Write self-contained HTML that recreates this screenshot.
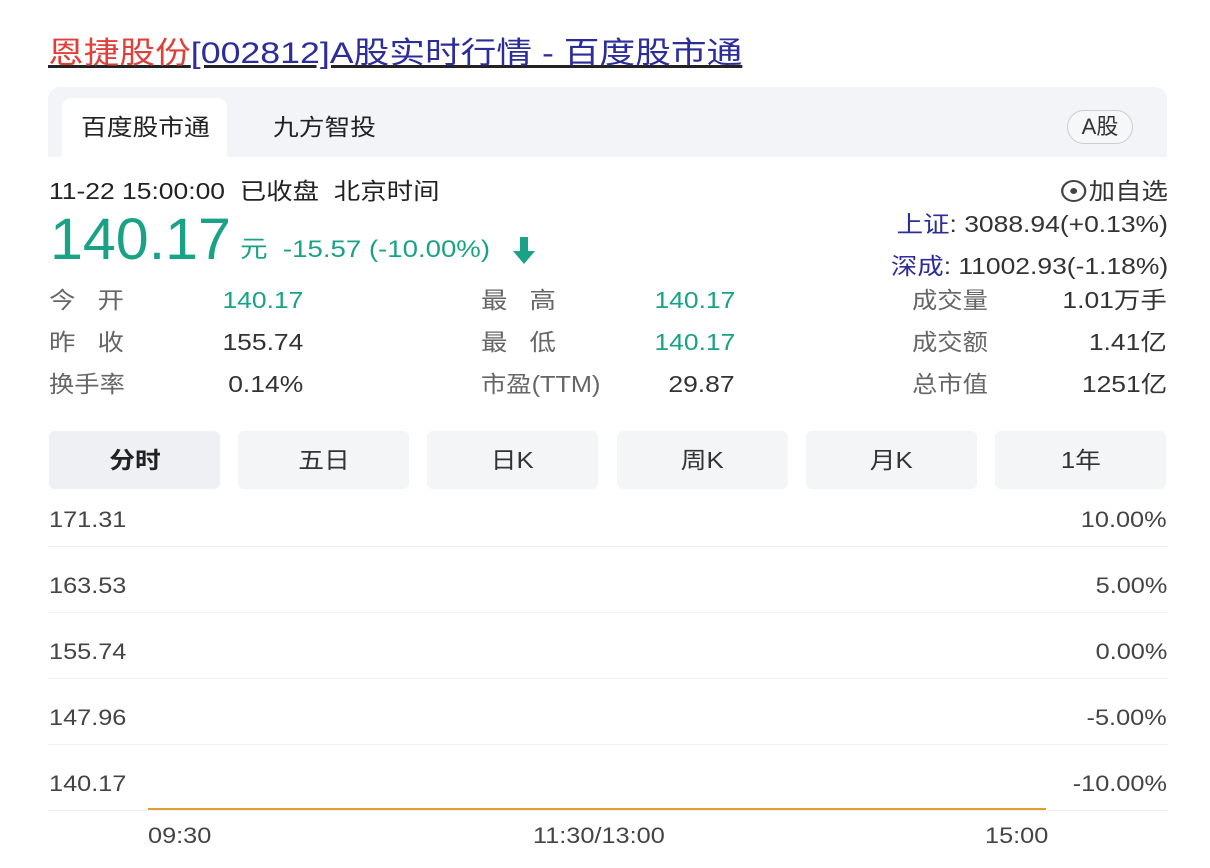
<!DOCTYPE html>
<html><head><meta charset="utf-8"><style>
body{margin:0;width:1210px;height:868px;background:#fff;font-family:"Liberation Sans","Noto Sans CJK SC",sans-serif;position:relative;overflow:hidden;color:#222}
.a{position:absolute;white-space:nowrap;line-height:28px}
.s{transform:scaleX(1.15);transform-origin:left center}
.sr{transform:scaleX(1.15);transform-origin:right center}
.g{color:#1aa286}
.l{color:#666;font-size:23px}
.v{font-size:23px;color:#333}
.btn{position:absolute;top:431px;height:58px;width:171px;background:#f4f5f7;border-radius:6px;text-align:center;line-height:58px;font-size:23px;color:#333}
.btn span{display:inline-block;transform:scaleX(1.12)}
.grid{position:absolute;left:48px;width:1120px;height:1px;background:#eef0f3}
.yl{position:absolute;left:49px;font-size:22px;color:#444;line-height:26px;transform:scaleX(1.15);transform-origin:left center}
.yr{position:absolute;right:43px;font-size:22px;color:#444;line-height:26px;transform:scaleX(1.15);transform-origin:right center}
</style></head><body>
<div class="a s" style="left:48px;top:36px;font-size:30px;line-height:36px;text-decoration:underline;transform:scaleX(1.19)"><span style="color:#e0403a">恩捷股份</span><span style="color:#2c2c9a">[002812]A股实时行情 - 百度股市通</span></div>
<div class="a" style="left:48px;top:87px;width:1119px;height:70px;background:#f2f4f7;border-radius:12px 12px 0 0"></div>
<div class="a" style="left:62px;top:98px;width:165px;height:60px;background:#fff;border-radius:10px 10px 0 0"></div>
<div class="a s" style="left:81px;top:113px;font-size:23px;color:#222;transform:scaleX(1.12)">百度股市通</div>
<div class="a s" style="left:273px;top:113px;font-size:23px;color:#222;transform:scaleX(1.12)">九方智投</div>
<div class="a" style="left:1067px;top:110px;width:64px;height:32px;border:1px solid #ccc;border-radius:17px;text-align:center;line-height:32px;font-size:22px;color:#333;background:#f6f7f9">A股</div>
<div class="a s" style="left:49px;top:177px;font-size:23px;color:#222">11-22 15:00:00&nbsp;&nbsp;已收盘&nbsp;&nbsp;北京时间</div>
<div class="a g" style="left:50px;top:208px;font-size:58px;line-height:64px;transform:scaleX(1.02);transform-origin:left center">140.17</div>
<div class="a g s" style="left:240px;top:236px;font-size:24px">元&nbsp;&nbsp;-15.57 (-10.00%)</div>
<svg class="a" style="left:510px;top:235px" width="28" height="32" viewBox="0 0 28 32"><path d="M10 2h8v14h7L14 29 3 16h7z" fill="#1aa286"/></svg>
<div class="a sr" style="right:42px;top:177px;font-size:23px;color:#333"><span style="display:inline-block;width:18px;height:18px;border:2px solid #444;border-radius:50%;vertical-align:-3px;position:relative;margin-right:2px"><span style="position:absolute;left:6px;top:6px;width:6px;height:6px;background:#444;border-radius:50%"></span></span>加自选</div>
<div class="a sr" style="right:42px;top:210px;font-size:23px;color:#333"><span style="color:#2c2c9a">上证</span>: 3088.94(+0.13%)</div>
<div class="a sr" style="right:42px;top:252px;font-size:23px;color:#333"><span style="color:#2c2c9a">深成</span>: 11002.93(-1.18%)</div>
<div class="a l s" style="left:49px;top:286px">今&nbsp;&nbsp;&nbsp;开</div>
<div class="a l s" style="left:49px;top:328px">昨&nbsp;&nbsp;&nbsp;收</div>
<div class="a l s" style="left:49px;top:370px;transform:scaleX(1.1)">换手率</div>
<div class="a v sr" style="right:907px;top:286px;color:#1aa286">140.17</div>
<div class="a v sr" style="right:907px;top:328px">155.74</div>
<div class="a v sr" style="right:907px;top:370px">0.14%</div>
<div class="a l s" style="left:481px;top:286px">最&nbsp;&nbsp;&nbsp;高</div>
<div class="a l s" style="left:481px;top:328px">最&nbsp;&nbsp;&nbsp;低</div>
<div class="a l s" style="left:481px;top:370px;transform:scaleX(1.1)">市盈(TTM)</div>
<div class="a v sr" style="right:475px;top:286px;color:#1aa286">140.17</div>
<div class="a v sr" style="right:475px;top:328px;color:#1aa286">140.17</div>
<div class="a v sr" style="right:475px;top:370px">29.87</div>
<div class="a l s" style="left:912px;top:286px;transform:scaleX(1.1)">成交量</div>
<div class="a l s" style="left:912px;top:328px;transform:scaleX(1.1)">成交额</div>
<div class="a l s" style="left:912px;top:370px;transform:scaleX(1.1)">总市值</div>
<div class="a v sr" style="right:43px;top:286px">1.01万手</div>
<div class="a v sr" style="right:43px;top:328px">1.41亿</div>
<div class="a v sr" style="right:43px;top:370px">1251亿</div>
<div class="btn" style="left:49px;background:#eef0f3;font-weight:bold;color:#222"><span>分时</span></div>
<div class="btn" style="left:238px"><span>五日</span></div>
<div class="btn" style="left:427px"><span>日K</span></div>
<div class="btn" style="left:617px"><span>周K</span></div>
<div class="btn" style="left:806px"><span>月K</span></div>
<div class="btn" style="left:995px"><span>1年</span></div>
<div class="grid" style="top:546px"></div>
<div class="grid" style="top:612px"></div>
<div class="grid" style="top:678px"></div>
<div class="grid" style="top:744px"></div>
<div class="grid" style="top:810px"></div>
<div class="yl" style="top:507px">171.31</div><div class="yr" style="top:507px">10.00%</div>
<div class="yl" style="top:573px">163.53</div><div class="yr" style="top:573px">5.00%</div>
<div class="yl" style="top:639px">155.74</div><div class="yr" style="top:639px">0.00%</div>
<div class="yl" style="top:705px">147.96</div><div class="yr" style="top:705px">-5.00%</div>
<div class="yl" style="top:771px">140.17</div><div class="yr" style="top:771px">-10.00%</div>
<div class="a" style="left:148px;top:808px;width:898px;height:2px;background:#e0a030"></div>
<div class="a s" style="left:148px;top:822px;font-size:22px;color:#444">09:30</div>
<div class="a s" style="left:533px;top:822px;font-size:22px;color:#444">11:30/13:00</div>
<div class="a s" style="left:985px;top:822px;font-size:22px;color:#444">15:00</div>
</body></html>
